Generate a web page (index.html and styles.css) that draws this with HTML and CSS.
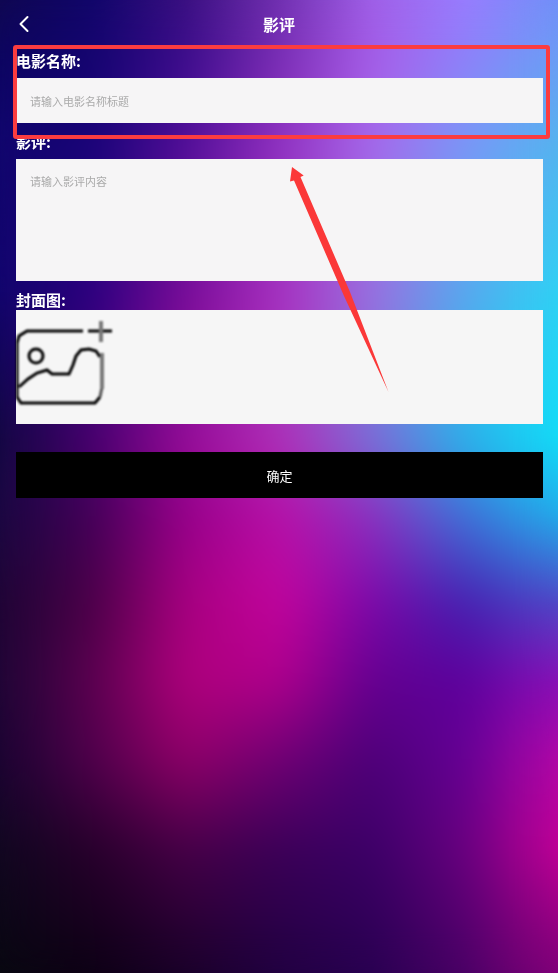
FILE: index.html
```html
<!DOCTYPE html>
<html lang="zh-CN">
<head>
    <meta charset="UTF-8">
    <meta name="viewport" content="width=device-width, initial-scale=1.0">
    <title>影评</title>
    <link rel="stylesheet" href="styles.css">
</head>
<body>
    <div class="backdrop" aria-hidden="true">
        <div class="band band-1"></div>
        <div class="band band-2"></div>
        <div class="band band-3"></div>
        <div class="band band-4"></div>
        <div class="band band-5"></div>
        <div class="band band-6"></div>
        <div class="band band-7"></div>
        <div class="band band-8"></div>
        <div class="band band-9"></div>
        <div class="band band-10"></div>
        <div class="soften"></div>
    </div>

    <header class="header">
        <a class="back" href="#" aria-label="返回">
            <svg width="12" height="18" viewBox="0 0 12 18">
                <path d="M9.5 2 2.5 9l7 7" fill="none" stroke="#fff" stroke-width="2" stroke-linecap="round" stroke-linejoin="round"/>
            </svg>
        </a>
        <h1 class="title">影评</h1>
    </header>

    <form class="form">
        <div class="field">
            <label class="label" for="name">电影名称:</label>
            <input class="control" id="name" type="text" placeholder="请输入电影名称标题">
            <div class="highlight"></div>
        </div>

        <div class="field">
            <label class="label" for="review">影评:</label>
            <textarea class="control control-area" id="review" placeholder="请输入影评内容"></textarea>
            <svg class="arrow" width="100" height="226" viewBox="0 0 100 226">
                <path d="M2 0 13.7 8.5 10.5 10 60 125 98.5 225 54 129 4 13.5 0 14.5z" fill="#fb3838"/>
            </svg>
        </div>

        <div class="field">
            <label class="label label-tight" for="cover">封面图:</label>
            <button class="upload" id="cover" type="button" aria-label="上传封面图">
                <svg class="upload-icon" width="96" height="96" viewBox="0 0 96 96" fill="none" stroke="#000" stroke-width="3">
                    <path d="M67 12H11L3 17 1 24V78L5 84H79L84 78"/>
                    <path d="M84 78 86 68" stroke="#555"/>
                    <path d="M84 38 80 32 73 30 65 31 60 37 57 46 53 55 36 55 31 51 21 54 12 60 3 68"/>
                    <circle cx="20" cy="37" r="7"/>
                    <path d="M72 12H96"/>
                    <path d="M85 2V23" stroke="#777" stroke-width="4"/>
                    <path d="M86 34V70" stroke="#777" stroke-width="4"/>
                </svg>
            </button>
        </div>

        <button class="submit" type="button">确定</button>
    </form>
</body>
</html>
```

FILE: styles.css
```css
* {
    margin: 0;
    padding: 0;
    box-sizing: border-box;
}

body {
    min-height: 100vh;
    background: #10054c;
    color: #fff;
    font-family: "Noto Sans CJK SC", sans-serif;
}

/* colour mesh: each band fades in over the one before it */
.backdrop {
    position: fixed;
    inset: 0;
    z-index: -1;
    display: grid;
    background: linear-gradient(to right, #100850, #10066a, #3a1080, #7030b0, #a060e8, #9a7cff, #7090f8);
}

.band {
    grid-area: 1 / 1;
    -webkit-mask-image: linear-gradient(transparent var(--from), #000 var(--to));
    mask-image: linear-gradient(transparent var(--from), #000 var(--to));
}

.soften {
    grid-area: 1 / 1;
    backdrop-filter: blur(20px);
}

.band-1 {
    --from: 0%;
    --to: 6%;
    background: linear-gradient(to right, #0c0560, #140470, #3c0c8c, #7a2cb4, #a85ce8, #8e80fa, #68a0f4);
}

.band-2 {
    --from: 6%;
    --to: 14%;
    background: linear-gradient(to right, #10066c, #180478, #500e98, #9030c0, #a868ec, #7c96f8, #54b4ee);
}

.band-3 {
    --from: 14%;
    --to: 30%;
    background: linear-gradient(to right, #10056c, #2c0080, #7a0c98, #a830c0, #9a70e0, #58a8ee, #2cd4f4);
}

.band-4 {
    --from: 30%;
    --to: 45%;
    background: linear-gradient(to right, #100840, #480070, #960c98, #b030b8, #7a70d8, #28b4ea, #10e0f8);
}

.band-5 {
    --from: 45%;
    --to: 53%;
    background: linear-gradient(to right, #180840, #440058, #98008a, #b810a8, #8c30c0, #4070d8, #20b0ec);
}

.band-6 {
    --from: 53%;
    --to: 62%;
    background: linear-gradient(to right, #1c0534, #4c0048, #a80080, #c4049c, #7c08a8, #4420b0, #5048c8);
}

.band-7 {
    --from: 62%;
    --to: 70%;
    background: linear-gradient(to right, #1c0634, #5c0050, #b0007c, #b0008c, #640090, #5c009c, #8c10b8);
}

.band-8 {
    --from: 70%;
    --to: 78%;
    background: linear-gradient(to right, #180430, #50004c, #900068, #700074, #4c0078, #640094, #b808a8);
}

.band-9 {
    --from: 78%;
    --to: 87%;
    background: linear-gradient(to right, #100820, #28002c, #480048, #3c0058, #3c0068, #680080, #c80098);
}

.band-10 {
    --from: 87%;
    --to: 100%;
    background: linear-gradient(to right, #080810, #0c0014, #180028, #200040, #280050, #480064, #800078);
}

.header {
    display: grid;
    grid-template-columns: 48px 1fr 48px;
    align-items: center;
    height: 48px;
}

.back {
    display: flex;
    justify-content: center;
}

.title {
    font-size: 16px;
    line-height: 24px;
    text-align: center;
}

.form {
    display: flex;
    flex-direction: column;
    gap: 9px;
    padding: 3px 15px 24px 16px;
}

.field {
    position: relative;
    display: flex;
    flex-direction: column;
}

.label {
    margin-bottom: 7px;
    font-size: 15px;
    font-weight: 700;
    line-height: 20px;
}

.label-tight {
    margin-bottom: 0;
}

.control {
    width: 100%;
    height: 45px;
    padding: 0 14px;
    border: 0;
    border-radius: 0;
    outline: 0;
    background: #f6f5f6;
    color: #333;
    font-family: inherit;
    font-size: 11px;
    line-height: 18px;
}

.control::placeholder {
    color: #aaa;
}

.control-area {
    height: 122px;
    padding: 13px 14px;
    resize: none;
}

.highlight {
    position: absolute;
    inset: -6px -7px -16px -3px;
    z-index: 1;
    border: 4px solid #fb3c40;
    border-radius: 3px;
    pointer-events: none;
}

.arrow {
    position: absolute;
    top: 35px;
    left: 52%;
    z-index: 1;
    pointer-events: none;
}

.upload {
    display: flex;
    align-items: center;
    height: 114px;
    border: 0;
    background: #f6f6f6;
    cursor: pointer;
}

.upload-icon {
    filter: blur(1px);
}

.submit {
    height: 46px;
    margin-top: 19px;
    border: 0;
    background: #000;
    color: #fff;
    font-family: inherit;
    font-size: 13px;
    cursor: pointer;
}
```
